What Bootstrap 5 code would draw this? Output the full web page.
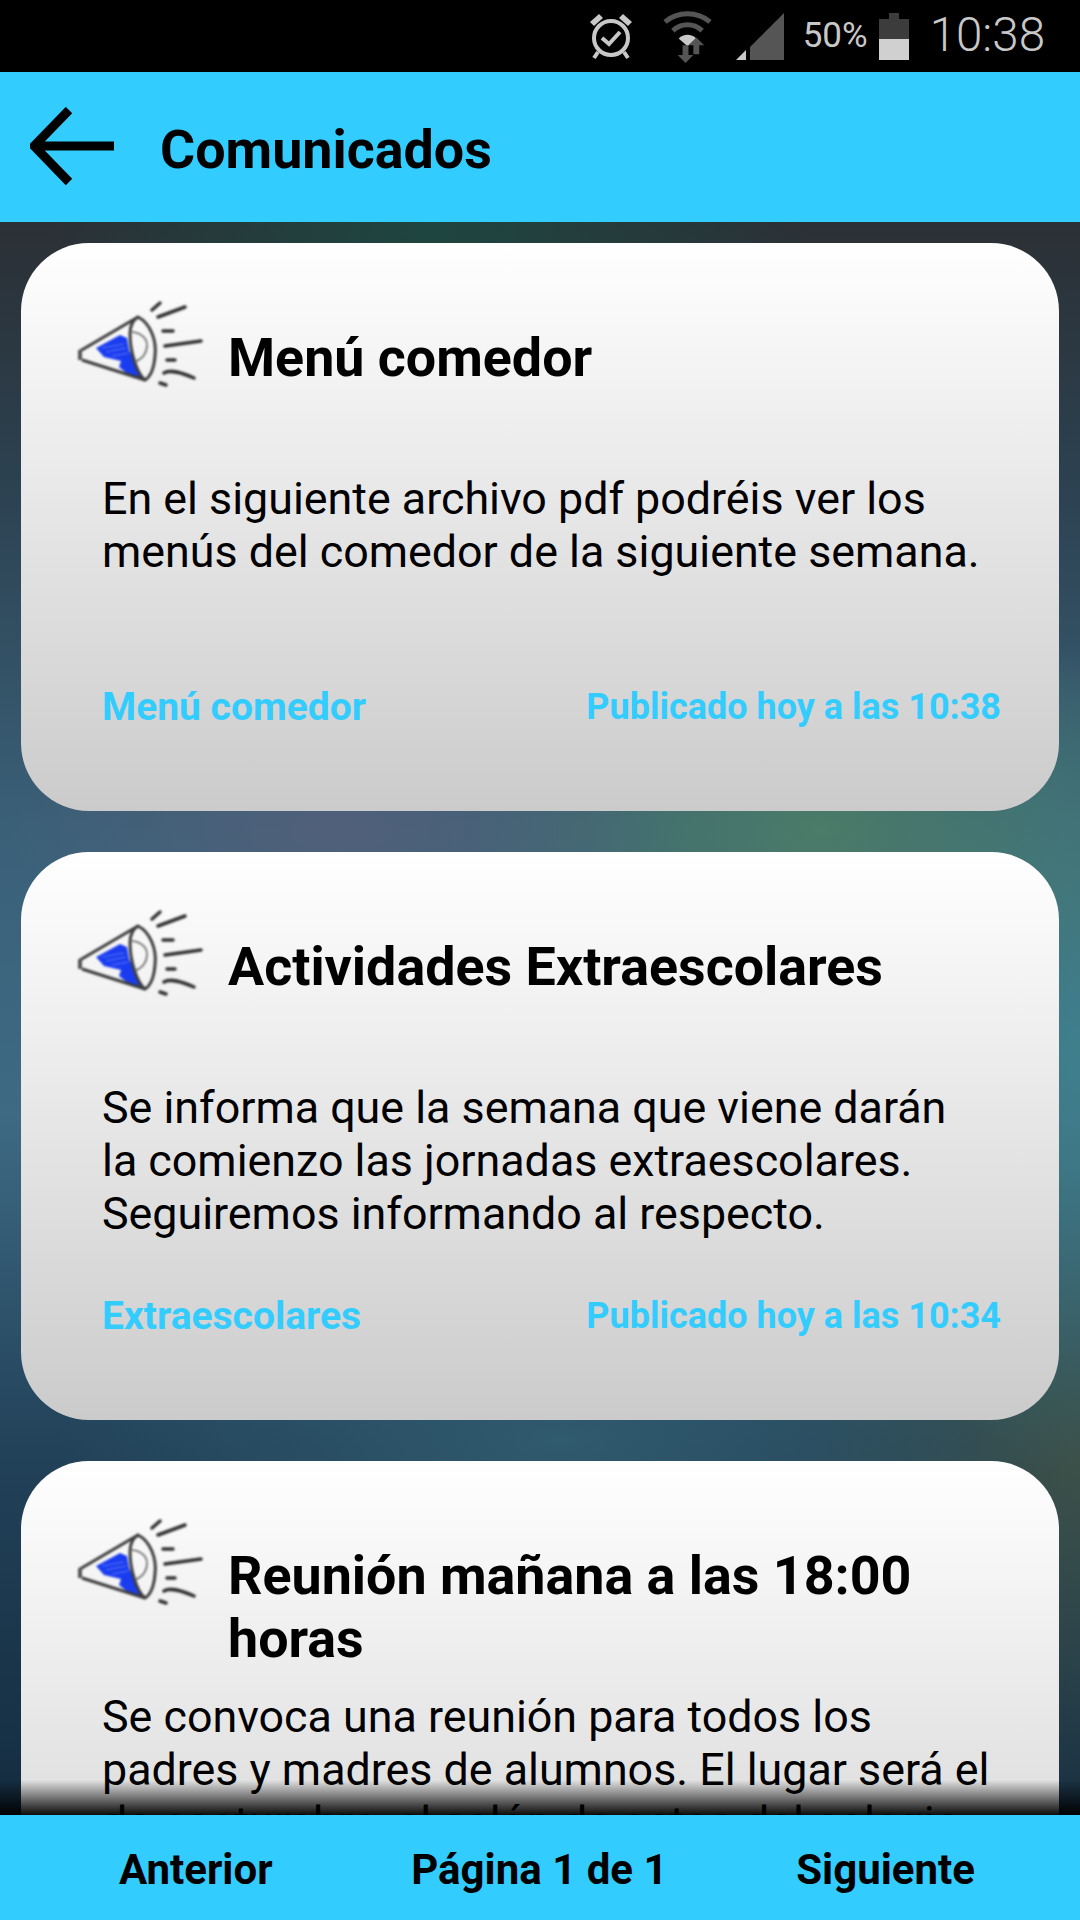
<!DOCTYPE html>
<html lang="es">
<head>
    <meta charset="UTF-8">
    <meta name="viewport" content="width=device-width, initial-scale=1.0">
    <title>Comunicados</title>
    <link href="https://cdn.jsdelivr.net/npm/bootstrap@5.3.0/dist/css/bootstrap.min.css" rel="stylesheet">
    <style>
        html, body { height: 1920px; overflow: hidden; }
        body { font-family: Roboto, "Liberation Sans", sans-serif; color: #000; background: #000; }
        .phone { width: 1080px; height: 1920px; }
        .status-bar { height: 72px; background: #000; padding-right: 35px; color: #c8c8c8; }
        .status-bar svg { flex-shrink: 0; }
        .st-alarm { margin-right: 30px; }
        .st-wifi { margin-right: 24px; }
        .status-pct { font-size: 35px; margin-left: 19px; margin-right: 11px; }
        .status-time { font-size: 47.5px; font-weight: 300; margin-left: 21px; }
        .app-head { height: 150px; background: #33ccff; padding-left: 30px; }
        .app-head h1 { font-size: 53.8px; font-weight: 700; margin: 6px 0 0 40px; }
        .wall {
            min-height: 0;
            padding: 21px 21px 0;
            background:
                radial-gradient(380px 150px at 430px 10px, #1e4640 0, rgba(30,70,64,0) 100%),
                radial-gradient(330px 150px at 340px 608px, #51607a 0, rgba(81,96,122,0) 100%),
                radial-gradient(400px 230px at 820px 608px, #4a7c68 0, rgba(74,124,104,0) 100%),
                radial-gradient(240px 420px at 1080px 830px, #3f7f8c 0, rgba(63,127,140,0) 100%),
                radial-gradient(500px 200px at 560px 1218px, #305a6e 0, rgba(48,90,110,0) 100%),
                radial-gradient(340px 380px at 1080px 1240px, #3c5048 0, rgba(60,80,72,0) 100%),
                linear-gradient(#2b3035 0, #2c4150 16%, #3a6078 38%, #3e6a84 56%, #224259 77%, #142c40 100%);
        }
        .notice {
            height: 568px;
            border-radius: 68px;
            margin-bottom: 41px;
            padding: 0 58px 0 81px;
            background: linear-gradient(#fff 0, #cbcbcb 100%);
            flex-shrink: 0;
        }
        .notice-head { height: 229px; padding-top: 83px; margin-left: -81px; padding-left: 39px; }
        .notice-head svg { width: 160px; height: 110px; margin-top: -36px; margin-right: 8px; flex-shrink: 0; filter: blur(.9px); }
        .notice-head h2 { font-size: 53.8px; line-height: 63px; font-weight: 700; margin: 0; }
        .notice-text { font-size: 44.8px; line-height: 53px; height: 212px; }
        .notice-foot { font-size: 39px; font-weight: 700; color: #33ccff; line-height: 46px; }
        .foot-date { font-size: 36px; }
        .fade-bottom {
            left: 0; right: 0; bottom: 0; height: 35px;
            background: linear-gradient(rgba(0,0,0,0), rgba(0,0,0,.95));
        }
        .app-foot { height: 105px; background: #33ccff; padding: 4px 105px 0 119px; font-size: 42px; font-weight: 700; }
        .foot-page { margin-left: 10px; }
    </style>
</head>
<body>
    <svg width="0" height="0" class="d-block">
        <defs>
            <symbol id="horn" viewBox="0 0 160 110">
                <path d="M36 58 60 45 67 48 69 60 73 68 83 89 69 85 59 77 61 71 44 67Z" fill="#1a3cf0"/>
                <path d="M42 58 64 54M46 62 66 58M52 66 68 63" stroke="#5f78f5" stroke-width="1" fill="none"/>
                <path d="M20 61 78 27M22 70 85 90" fill="none" stroke="#3c3c3c" stroke-width="3"/>
                <path d="M20 60v10" stroke="#555" stroke-width="4"/>
                <path d="M78 27C90 33 97 50 95 66 94 78 90 87 85 90 77 84 70 62 70 44 70 36 73 30 78 27Z" fill="none" stroke="#3c3c3c" stroke-width="3"/>
                <path d="M72 42C82 43 87 49 87 55 87 63 82 69 75 72" fill="none" stroke="#666" stroke-width="1.5"/>
                <path d="M92 20 100 13M98 27 125 17M103 41h10M105 56 141 51M107 70h8M104 83C110 79 120 82 134 88M100 93l6 2" fill="none" stroke="#333" stroke-width="3.5" stroke-linecap="round"/>
            </symbol>
        </defs>
    </svg>

    <div class="phone d-flex flex-column">
        <!-- barra de estado -->
        <div class="status-bar d-flex align-items-center justify-content-end flex-shrink-0">
            <svg width="44" height="48" viewBox="0 0 44 48" class="st-alarm">
                <circle cx="22" cy="26" r="17" fill="none" stroke="#c8c8c8" stroke-width="4"/>
                <path d="M1 10 10 2l4 4-9 8ZM43 10 34 2l-4 4 9 8Z" fill="#c8c8c8"/>
                <path d="M13 26l7 6 11-12" fill="none" stroke="#c8c8c8" stroke-width="4"/>
                <path d="M9 40 5 46M35 40l4 6" stroke="#c8c8c8" stroke-width="4"/>
            </svg>
            <svg width="49" height="53" viewBox="0 0 50 54" class="st-wifi">
                <path d="M2 12C15 1 35 1 48 12" fill="none" stroke="#555" stroke-width="5"/>
                <path d="M10 21C19 13 31 13 40 21" fill="none" stroke="#555" stroke-width="5"/>
                <path d="M16 29C21 24 29 24 34 29L25 37Z" fill="#c8c8c8"/>
                <path d="M20 36h6v10h5l-8 8-8-8h5ZM31 45v-9h-5l8-8 8 8h-5v9Z" fill="#555"/>
            </svg>
            <svg width="48" height="47" viewBox="0 0 48 47">
                <path d="M48 0V47H14V34Z" fill="#555"/>
                <path d="M0 47 10 37V47Z" fill="#c8c8c8"/>
            </svg>
            <span class="status-pct">50%</span>
            <svg width="30" height="47" viewBox="0 0 30 47">
                <path d="M10 0h10v6h10v20H0V6h10Z" fill="#3c3c3c"/>
                <path d="M0 26h30v21H0Z" fill="#d0d0d0"/>
            </svg>
            <span class="status-time">10:38</span>
        </div>

        <!-- cabecera -->
        <header class="app-head d-flex align-items-center flex-shrink-0">
            <svg width="90" height="80" viewBox="0 0 90 80">
                <path d="M84 39H6M39 3 4 39l35 36" fill="none" stroke="#000" stroke-width="9"/>
            </svg>
            <h1>Comunicados</h1>
        </header>

        <!-- comunicados -->
        <div class="position-relative flex-grow-1 overflow-hidden d-flex">
            <main class="wall flex-grow-1 d-flex flex-column">
                <article class="notice d-flex flex-column">
                    <div class="notice-head d-flex">
                        <svg><use href="#horn"/></svg>
                        <h2>Menú comedor</h2>
                    </div>
                    <p class="notice-text mb-0">En el siguiente archivo pdf podréis ver los menús del comedor de la siguiente semana.</p>
                    <div class="notice-foot d-flex justify-content-between align-items-center">
                        <span>Menú comedor</span>
                        <span class="foot-date">Publicado hoy a las 10:38</span>
                    </div>
                </article>
                <article class="notice d-flex flex-column">
                    <div class="notice-head d-flex">
                        <svg><use href="#horn"/></svg>
                        <h2>Actividades Extraescolares</h2>
                    </div>
                    <p class="notice-text mb-0">Se informa que la semana que viene darán<br>la comienzo las jornadas extraescolares. Seguiremos informando al respecto.</p>
                    <div class="notice-foot d-flex justify-content-between align-items-center">
                        <span>Extraescolares</span>
                        <span class="foot-date">Publicado hoy a las 10:34</span>
                    </div>
                </article>
                <article class="notice d-flex flex-column">
                    <div class="notice-head d-flex">
                        <svg><use href="#horn"/></svg>
                        <h2>Reunión mañana a las 18:00 horas</h2>
                    </div>
                    <p class="notice-text mb-0">Se convoca una reunión para todos los padres y madres de alumnos. El lugar será el de costumbre, el salón de actos del colegio.</p>
                </article>
            </main>
            <div class="fade-bottom position-absolute"></div>
        </div>

        <!-- paginacion -->
        <footer class="app-foot d-flex align-items-center justify-content-between flex-shrink-0">
            <span>Anterior</span>
            <span class="foot-page">Página 1 de 1</span>
            <span>Siguiente</span>
        </footer>
    </div>

    <script src="https://cdn.jsdelivr.net/npm/bootstrap@5.3.0/dist/js/bootstrap.bundle.min.js"></script>
</body>
</html>
